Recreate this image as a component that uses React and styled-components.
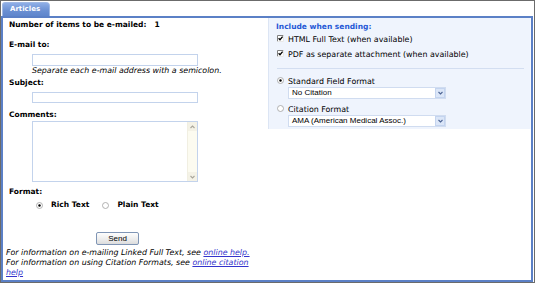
import React from 'react';
import styled, { createGlobalStyle } from 'styled-components';

const Global = createGlobalStyle`
  html, body { margin: 0; padding: 0; background: #fff; }
  body { font-family: "DejaVu Sans", Verdana, sans-serif; color: #000; }
`;

const Frame = styled.div`
  box-sizing: border-box;
  width: 535px;
  height: 283px;
  border: 1px solid #6b6b6b;
  padding: 1px 1px 0 0;
  display: flex;
  flex-direction: column;
  background: #fff;
`;

const Tab = styled.div`
  box-sizing: border-box;
  width: 48px;
  height: 14px;
  margin-left: 1px;
  padding-left: 7px;
  border-radius: 3px 4px 0 0;
  border: 1px solid #9fb8e4;
  border-bottom: none;
  background: linear-gradient(#8eaee6, #6a8fd2 60%, #5f86cc);
  color: #fff;
  font-weight: bold;
  font-size: 7px;
  line-height: 13px;
`;

const Panel = styled.div`
  flex: 1;
  display: flex;
  align-items: flex-start;
  border: 2px solid #5b80c6;
  min-height: 0;
`;

const LeftCol = styled.div`
  width: 264px;
  display: flex;
  flex-direction: column;
  align-items: flex-start;
`;

const Bold = styled.div`
  font-weight: bold;
  font-size: 7.5px;
  line-height: 10px;
  margin-left: 6px;
  margin-top: ${p => p.$mt || 0}px;
  white-space: nowrap;
`;

const Count = styled.span`
  margin-left: 8px;
`;

const TextInput = styled.input`
  box-sizing: border-box;
  width: 166px;
  height: ${p => p.$h}px;
  margin: ${p => p.$mt}px 0 0 29px;
  border: 1px solid #c3d3ec;
  padding: 0;
  background: #fff;
  outline: none;
`;

const Hint = styled.div`
  font-style: italic;
  font-size: 7.9px;
  line-height: 10px;
  margin-left: 29px;
  white-space: nowrap;
`;

const AreaBox = styled.div`
  box-sizing: border-box;
  width: 166px;
  height: 61px;
  margin: 1px 0 0 29px;
  border: 1px solid #c3d3ec;
  display: flex;
`;

const Area = styled.textarea`
  flex: 1;
  border: none;
  resize: none;
  outline: none;
  padding: 0;
  overflow: hidden;
`;

const ScrollBar = styled.div`
  width: 9px;
  background: #fcfbf0;
  display: flex;
  flex-direction: column;
  justify-content: space-between;
  border-left: 1px solid #f1efe2;
`;

const ScrollBtn = styled.div`
  height: 9px;
  display: flex;
  align-items: center;
  justify-content: center;
  background: #f4f2e6;
`;

const RadioRow = styled.div`
  display: flex;
  align-items: center;
  height: 10px;
  margin: 3px 0 0 33px;
`;

const RadioLabel = styled.span`
  font-weight: bold;
  font-size: 7.5px;
  line-height: 10px;
  margin-left: ${p => p.$ml}px;
  margin-right: ${p => p.$mr || 0}px;
`;

const SendButton = styled.button`
  box-sizing: border-box;
  width: 43px;
  height: 13px;
  margin: 22px 0 0 93px;
  padding: 0;
  border: 1px solid #7f95b5;
  border-radius: 2px;
  background: linear-gradient(#fdfdfd, #ececec 60%, #dcdcdc);
  font-family: "Liberation Sans", Arial, sans-serif;
  font-size: 8px;
  color: #000;
`;

const Footer = styled.div`
  margin: 3px 0 0 3px;
  width: 252px;
  font-style: italic;
  font-size: 7.9px;
  line-height: 10px;
`;

const Link = styled.a`
  color: #3333cc;
  text-decoration: underline;
`;

const RightBox = styled.div`
  flex: 1;
  box-sizing: border-box;
  margin-left: 1px;
  margin-right: 0;
  padding: 4px 0 2px 8px;
  background: #eff4fd;
  border-left: 1px solid #dce5f4;
  border-right: 1px solid #f7f9fe;
  display: flex;
  flex-direction: column;
  align-items: flex-start;
`;

const BoxTitle = styled.div`
  font-weight: bold;
  font-size: 7.5px;
  line-height: 10px;
  color: #2558d6;
  margin-left: -1px;
`;

const OptRow = styled.div`
  display: flex;
  align-items: flex-start;
  height: 10px;
  margin-top: ${p => p.$mt}px;
`;

const OptIcon = styled.span`
  display: flex;
  margin-top: ${p => p.$it || 0}px;
`;

const OptLabel = styled.span`
  font-size: 7.9px;
  line-height: 10px;
  margin-left: 4px;
  margin-top: ${p => p.$lt || 0}px;
  white-space: nowrap;
`;

const Separator = styled.div`
  align-self: stretch;
  height: 1px;
  margin: 8px 6px 0 0;
  background: #d3def1;
`;

const SelectBox = styled.div`
  box-sizing: border-box;
  width: 158px;
  height: 12px;
  margin-left: 11px;
  border: 1px solid #d0dcf0;
  background: #fff;
  display: flex;
  align-items: center;
`;

const SelectText = styled.span`
  flex: 1;
  font-family: "Liberation Sans", Arial, sans-serif;
  font-size: 8px;
  line-height: 10px;
  padding-left: 3px;
  white-space: nowrap;
`;

const SelectArrow = styled.span`
  box-sizing: border-box;
  width: 10px;
  height: 10px;
  background: #dbe6f8;
  border: 1px solid #c4d4ef;
  display: flex;
  align-items: center;
  justify-content: center;
`;

const Checkbox = () => (
  <svg width="7" height="7" viewBox="0 0 7 7">
    <rect x="0" y="0" width="7" height="7" fill="#fff" />
    <path d="M0.5 6.5 V0.5 H6.5" stroke="#808080" fill="none" />
    <path d="M6.5 0.5 V6.5 H0.5" stroke="#e8e8e8" fill="none" />
    <path d="M1.6 3.2 L3 4.7 L5.6 1.6" stroke="#000" strokeWidth="1.3" fill="none" />
  </svg>
);

const Radio = ({ on }) => (
  <svg width="7" height="7" viewBox="0 0 7 7">
    <circle cx="3.5" cy="3.5" r="3" fill="#fff" stroke="#a0a0a0" strokeWidth="0.8" />
    {on && <circle cx="3.5" cy="3.5" r="1.2" fill="#000" />}
  </svg>
);

const Chevron = ({ up, color = '#a9a69a' }) => (
  <svg width="5" height="4" viewBox="0 0 5 4">
    <path d={up ? 'M0.5 3 L2.5 1 L4.5 3' : 'M0.5 1 L2.5 3 L4.5 1'} stroke={color} strokeWidth="1.1" fill="none" />
  </svg>
);

const Select = ({ value }) => (
  <SelectBox>
    <SelectText>{value}</SelectText>
    <SelectArrow>
      <Chevron color="#4d6494" />
    </SelectArrow>
  </SelectBox>
);

export default function App() {
  return (
    <>
      <Global />
      <Frame>
        <Tab>Articles</Tab>
        <Panel>
          <LeftCol>
            <Bold $mt={2}>
              Number of items to be e-mailed:<Count>1</Count>
            </Bold>
            <Bold $mt={10}>E-mail to:</Bold>
            <TextInput $h={12} $mt={4} />
            <Hint>Separate each e-mail address with a semicolon.</Hint>
            <Bold $mt={2}>Subject:</Bold>
            <TextInput $h={11} $mt={4} />
            <Bold $mt={7}>Comments:</Bold>
            <AreaBox>
              <Area />
              <ScrollBar>
                <ScrollBtn><Chevron up /></ScrollBtn>
                <ScrollBtn><Chevron /></ScrollBtn>
              </ScrollBar>
            </AreaBox>
            <Bold $mt={5}>Format:</Bold>
            <RadioRow>
              <Radio on />
              <RadioLabel $ml={8} $mr={13}>Rich Text</RadioLabel>
              <Radio />
              <RadioLabel $ml={8}>Plain Text</RadioLabel>
            </RadioRow>
            <SendButton>Send</SendButton>
            <Footer>
              For information on e-mailing Linked Full Text, see <Link href="#">online help.</Link>
              <br />
              For information on using Citation Formats, see <Link href="#">online citation help</Link>
            </Footer>
          </LeftCol>
          <RightBox>
            <BoxTitle>Include when sending:</BoxTitle>
            <OptRow $mt={3}>
              <OptIcon $it={0}><Checkbox /></OptIcon>
              <OptLabel>HTML Full Text (when available)</OptLabel>
            </OptRow>
            <OptRow $mt={5}>
              <OptIcon $it={0}><Checkbox /></OptIcon>
              <OptLabel>PDF as separate attachment (when available)</OptLabel>
            </OptRow>
            <Separator />
            <OptRow $mt={8}>
              <OptIcon $it={0}><Radio on /></OptIcon>
              <OptLabel>Standard Field Format</OptLabel>
            </OptRow>
            <Select value="No Citation" />
            <OptRow $mt={6}>
              <OptIcon $it={0}><Radio /></OptIcon>
              <OptLabel>Citation Format</OptLabel>
            </OptRow>
            <Select value="AMA (American Medical Assoc.)" />
          </RightBox>
        </Panel>
      </Frame>
    </>
  );
}
